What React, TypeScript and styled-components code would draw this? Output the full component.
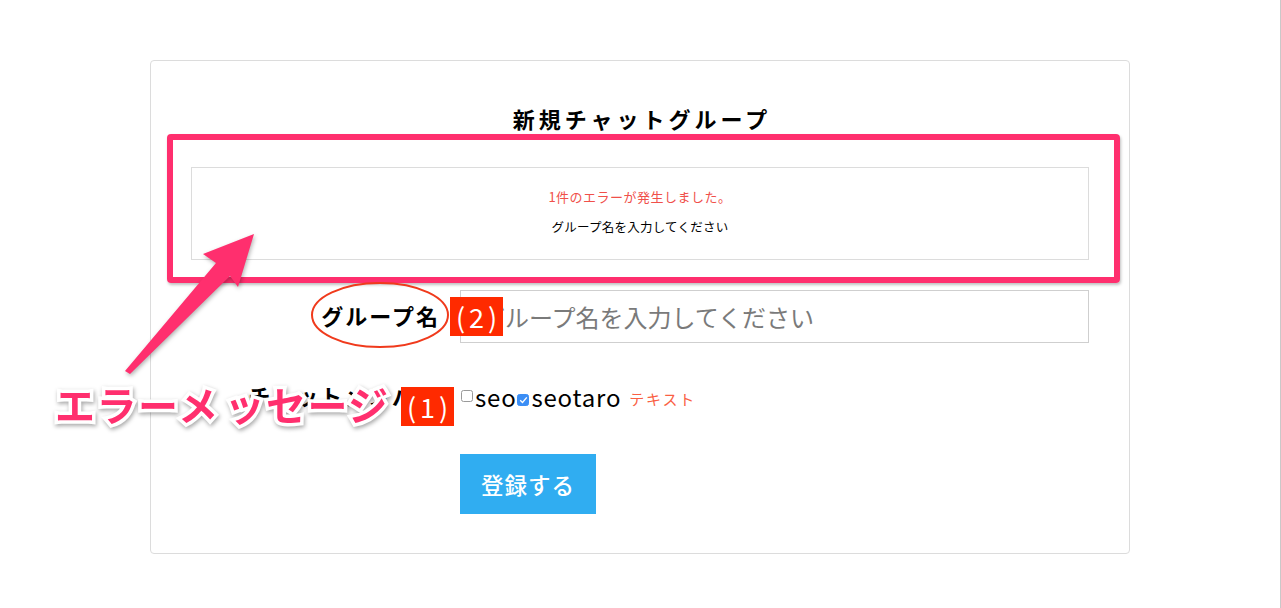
import React from 'react';
import styled, { createGlobalStyle } from 'styled-components';

const GlobalStyle = createGlobalStyle`
  html, body { margin: 0; padding: 0; background: #fff; }
  body { font-family: "Noto Sans CJK JP", "Noto Sans", sans-serif; color: #000; }
  * { box-sizing: border-box; }
`;

const Page = styled.div`
  position: relative;
  min-height: 608px;
  padding-top: 60px;
  border-right: 1px solid #c9c9c9;
`;

const Card = styled.div`
  width: 980px;
  margin: 0 auto;
  border: 1px solid #dcdcdc;
  border-radius: 4px;
  padding: 44px 40px 39px;
`;

const Title = styled.h1`
  margin: 0;
  font-size: 22px;
  line-height: 26px;
  font-weight: 700;
  letter-spacing: 4px;
  padding-left: 4px;
  text-align: center;
`;

const ErrorBox = styled.div`
  margin-top: 36px;
  height: 93px;
  border: 1px solid #dcdcdc;
  padding-top: 19px;
  text-align: center;
`;

const ErrorLine = styled.p<{ $danger?: boolean }>`
  margin: ${(p) => (p.$danger ? '0' : '10px 0 0')};
  font-size: ${(p) => (p.$danger ? '13px' : '12.5px')};
  letter-spacing: ${(p) => (p.$danger ? '0.5px' : '0.25px')};
  line-height: 20px;
  color: ${(p) => (p.$danger ? '#f0504a' : '#000')};
`;

const FormRow = styled.div<{ $top: number; $height: number }>`
  display: grid;
  grid-template-columns: 249px 629px;
  column-gap: 20px;
  align-items: center;
  margin-top: ${(p) => p.$top}px;
  height: ${(p) => p.$height}px;
`;

const Label = styled.label`
  text-align: right;
  font-size: 22px;
  line-height: 26px;
  font-weight: 700;
  letter-spacing: 2px;
  margin-top: -4px;
  white-space: nowrap;
`;

const TextInput = styled.input`
  height: 53px;
  width: 100%;
  border: 1px solid #cfcfcf;
  padding: 0 0 0 20px;
  font-family: inherit;
  font-size: 24px;
  outline: none;
  &::placeholder { color: #7a7a7a; }
`;

const Members = styled.div`
  display: flex;
  align-items: center;
  height: 100%;
`;

const Box = styled.span<{ $checked?: boolean; $shift: number }>`
  display: inline-flex;
  align-items: center;
  justify-content: center;
  width: 12px;
  height: 12px;
  margin: ${(p) => p.$shift}px 2px 0 1px;
  border-radius: 2.5px;
  border: 1px solid ${(p) => (p.$checked ? '#3b8ef5' : '#9a9a9a')};
  background: ${(p) => (p.$checked ? '#3b8ef5' : '#fff')};
  flex: none;
`;

const MemberName = styled.span`
  font-size: 24px;
  letter-spacing: 0.8px;
  line-height: 30px;
`;

const Hint = styled.span`
  margin-left: 8px;
  margin-top: 2px;
  font-size: 15px;
  letter-spacing: 1.8px;
  color: #fa5f44;
`;

const Submit = styled.button`
  grid-column: 2;
  width: 136px;
  height: 60px;
  border: none;
  background: #30adf1;
  color: #fff;
  font-family: inherit;
  font-size: 22.5px;
  font-weight: 500;
  letter-spacing: 1px;
  padding: 0;
`;

/* ---------- annotations ---------- */

const Highlight = styled.div`
  position: absolute;
  left: 167px;
  top: 134px;
  width: 953px;
  height: 149px;
  border: 6.5px solid #ff2f6e;
  border-radius: 4px;
  box-shadow: 1px 2px 3px rgba(0, 0, 0, 0.25);
  pointer-events: none;
`;

const Ellipse = styled.svg`
  position: absolute;
  left: 310px;
  top: 281px;
  overflow: visible;
`;

const Badge = styled.div<{ $x: number; $y: number }>`
  position: absolute;
  left: ${(p) => p.$x}px;
  top: ${(p) => p.$y}px;
  width: 53px;
  height: 39px;
  background: #ff2a00;
  color: #fff;
  font-size: 27px;
  letter-spacing: 4px;
  padding-left: 4px;
  display: flex;
  align-items: center;
  justify-content: center;
  line-height: 1;
`;

const Callout = styled.div`
  position: absolute;
  left: 55px;
  top: 382px;
  font-size: 40px;
  line-height: 44px;
  font-weight: 700;
  letter-spacing: 1.5px;
  color: #ff2f6e;
  white-space: pre;
  -webkit-text-stroke: 7px #fff;
  paint-order: stroke fill;
  filter: drop-shadow(1px 2px 2px rgba(0, 0, 0, 0.35));
`;

const CalloutGap = styled.span`
  margin-left: 5px;
`;

const Arrow = styled.svg`
  position: absolute;
  left: 100px;
  top: 220px;
  overflow: visible;
  filter: drop-shadow(1px 2px 2px rgba(0, 0, 0, 0.3));
`;

export default function App() {
  return (
    <>
      <GlobalStyle />
      <Page>
        <Card>
          <Title>新規チャットグループ</Title>
          <ErrorBox>
            <ErrorLine $danger>1件のエラーが発生しました。</ErrorLine>
            <ErrorLine>グループ名を入力してください</ErrorLine>
          </ErrorBox>
          <FormRow $top={30} $height={53}>
            <Label>グループ名</Label>
            <TextInput placeholder="グループ名を入力してください" />
          </FormRow>
          <FormRow $top={38} $height={32}>
            <Label>チャットメンバー</Label>
            <Members>
              <Box $shift={-2} />
              <MemberName>seo</MemberName>
              <Box $checked $shift={6}>
                <svg width="9" height="8" viewBox="0 0 9 8">
                  <path d="M1.2 4.2 L3.5 6.4 L7.8 1.4" fill="none" stroke="#fff" strokeWidth="1.4" />
                </svg>
              </Box>
              <MemberName>seotaro</MemberName>
              <Hint>テキスト</Hint>
            </Members>
          </FormRow>
          <FormRow $top={41} $height={60}>
            <Submit>登録する</Submit>
          </FormRow>
        </Card>

        <Highlight />
        <Ellipse width="140" height="68" viewBox="0 0 140 68">
          <ellipse cx="70" cy="34" rx="68" ry="32" fill="none" stroke="#f03a1c" strokeWidth="2" />
        </Ellipse>
        <Badge $x={450} $y={297}>(2)</Badge>
        <Callout>
          エラーメ<CalloutGap>ッセージ</CalloutGap>
        </Callout>
        <Badge $x={401} $y={387}>(1)</Badge>
        <Arrow width="170" height="170" viewBox="0 0 170 170">
          <polygon
            points="25,151 116,43 103,34 154,14 138,67 130,56 30,154"
            fill="#ff2f6e"
          />
        </Arrow>
      </Page>
    </>
  );
}
